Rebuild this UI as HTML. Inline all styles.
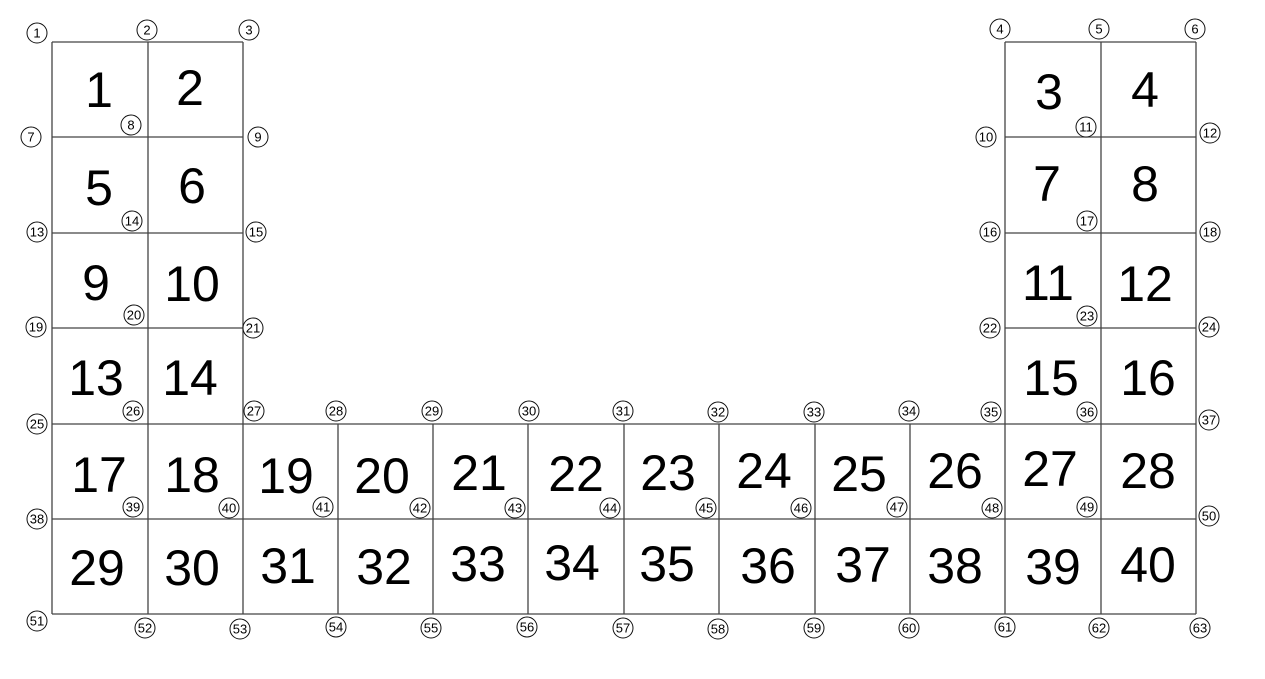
<!DOCTYPE html>
<html><head><meta charset="utf-8"><style>
html,body{margin:0;padding:0;background:#fff;width:1265px;height:679px;overflow:hidden}
svg{display:block}
.b{font:50px "Liberation Sans",sans-serif;fill:#000;text-anchor:middle;dominant-baseline:central}
.n{font:13px "Liberation Sans",sans-serif;fill:#000;text-anchor:middle;dominant-baseline:central}
circle{fill:#fff;stroke:#111;stroke-width:1}
line{stroke:#444;stroke-width:1.3}
</style></head><body>
<svg width="1265" height="679" viewBox="0 0 1265 679">
<g>
<line x1="52" y1="42" x2="243" y2="42"/><line x1="52" y1="137" x2="243" y2="137"/><line x1="52" y1="233" x2="243" y2="233"/><line x1="52" y1="328" x2="243" y2="328"/>
<line x1="52" y1="42" x2="52" y2="614"/><line x1="148" y1="42" x2="148" y2="614"/><line x1="243" y1="42" x2="243" y2="614"/>
<line x1="1005" y1="42" x2="1196" y2="42"/><line x1="1005" y1="137" x2="1196" y2="137"/><line x1="1005" y1="233" x2="1196" y2="233"/><line x1="1005" y1="328" x2="1196" y2="328"/>
<line x1="1005" y1="42" x2="1005" y2="614"/><line x1="1101" y1="42" x2="1101" y2="614"/><line x1="1196" y1="42" x2="1196" y2="614"/>
<line x1="52" y1="424" x2="1196" y2="424"/><line x1="52" y1="519" x2="1196" y2="519"/><line x1="52" y1="614" x2="1196" y2="614"/>
<line x1="338" y1="424" x2="338" y2="614"/><line x1="433" y1="424" x2="433" y2="614"/><line x1="528" y1="424" x2="528" y2="614"/><line x1="624" y1="424" x2="624" y2="614"/><line x1="719" y1="424" x2="719" y2="614"/><line x1="815" y1="424" x2="815" y2="614"/><line x1="910" y1="424" x2="910" y2="614"/>
</g>
<g>
<text class="b" x="99" y="90">1</text><text class="b" x="190" y="88">2</text><text class="b" x="1049" y="92">3</text><text class="b" x="1145" y="90">4</text>
<text class="b" x="99" y="188">5</text><text class="b" x="192" y="186">6</text><text class="b" x="1047" y="184">7</text><text class="b" x="1145" y="184">8</text>
<text class="b" x="96" y="283">9</text><text class="b" x="192" y="284">10</text><text class="b" x="1048" y="283">11</text><text class="b" x="1145" y="284">12</text>
<text class="b" x="96" y="378">13</text><text class="b" x="190" y="378">14</text><text class="b" x="1051" y="378">15</text><text class="b" x="1148" y="378">16</text>
<text class="b" x="99" y="475">17</text><text class="b" x="192" y="475">18</text><text class="b" x="286" y="476">19</text><text class="b" x="382" y="476">20</text><text class="b" x="479" y="473">21</text><text class="b" x="576" y="474">22</text><text class="b" x="668" y="473">23</text><text class="b" x="764" y="471">24</text><text class="b" x="859" y="474">25</text><text class="b" x="955" y="471">26</text><text class="b" x="1050" y="469">27</text><text class="b" x="1148" y="471">28</text>
<text class="b" x="97" y="568">29</text><text class="b" x="192" y="568">30</text><text class="b" x="288" y="566">31</text><text class="b" x="384" y="567">32</text><text class="b" x="478" y="564">33</text><text class="b" x="572" y="563">34</text><text class="b" x="667" y="564">35</text><text class="b" x="768" y="566">36</text><text class="b" x="863" y="565">37</text><text class="b" x="955" y="566">38</text><text class="b" x="1053" y="567">39</text><text class="b" x="1148" y="565">40</text>
</g>
<g>
<circle cx="37" cy="33" r="10"/><text class="n" x="37" y="33">1</text>
<circle cx="147" cy="30" r="10"/><text class="n" x="147" y="30">2</text>
<circle cx="249" cy="30" r="10"/><text class="n" x="249" y="30">3</text>
<circle cx="1000" cy="29" r="10"/><text class="n" x="1000" y="29">4</text>
<circle cx="1099" cy="29" r="10"/><text class="n" x="1099" y="29">5</text>
<circle cx="1195" cy="29" r="10"/><text class="n" x="1195" y="29">6</text>
<circle cx="31" cy="137" r="10"/><text class="n" x="31" y="137">7</text>
<circle cx="131" cy="125" r="10"/><text class="n" x="131" y="125">8</text>
<circle cx="258" cy="137" r="10"/><text class="n" x="258" y="137">9</text>
<circle cx="986" cy="137" r="10"/><text class="n" x="986" y="137">10</text>
<circle cx="1086" cy="127" r="10"/><text class="n" x="1086" y="127">11</text>
<circle cx="1210" cy="133" r="10"/><text class="n" x="1210" y="133">12</text>
<circle cx="37" cy="232" r="10"/><text class="n" x="37" y="232">13</text>
<circle cx="132" cy="221" r="10"/><text class="n" x="132" y="221">14</text>
<circle cx="256" cy="232" r="10"/><text class="n" x="256" y="232">15</text>
<circle cx="990" cy="232" r="10"/><text class="n" x="990" y="232">16</text>
<circle cx="1087" cy="221" r="10"/><text class="n" x="1087" y="221">17</text>
<circle cx="1210" cy="232" r="10"/><text class="n" x="1210" y="232">18</text>
<circle cx="36" cy="327" r="10"/><text class="n" x="36" y="327">19</text>
<circle cx="134" cy="315" r="10"/><text class="n" x="134" y="315">20</text>
<circle cx="253" cy="328" r="10"/><text class="n" x="253" y="328">21</text>
<circle cx="990" cy="328" r="10"/><text class="n" x="990" y="328">22</text>
<circle cx="1087" cy="316" r="10"/><text class="n" x="1087" y="316">23</text>
<circle cx="1209" cy="327" r="10"/><text class="n" x="1209" y="327">24</text>
<circle cx="37" cy="424" r="10"/><text class="n" x="37" y="424">25</text>
<circle cx="133" cy="411" r="10"/><text class="n" x="133" y="411">26</text>
<circle cx="254" cy="411" r="10"/><text class="n" x="254" y="411">27</text>
<circle cx="336" cy="411" r="10"/><text class="n" x="336" y="411">28</text>
<circle cx="432" cy="411" r="10"/><text class="n" x="432" y="411">29</text>
<circle cx="529" cy="411" r="10"/><text class="n" x="529" y="411">30</text>
<circle cx="623" cy="411" r="10"/><text class="n" x="623" y="411">31</text>
<circle cx="718" cy="412" r="10"/><text class="n" x="718" y="412">32</text>
<circle cx="814" cy="412" r="10"/><text class="n" x="814" y="412">33</text>
<circle cx="909" cy="411" r="10"/><text class="n" x="909" y="411">34</text>
<circle cx="991" cy="412" r="10"/><text class="n" x="991" y="412">35</text>
<circle cx="1087" cy="412" r="10"/><text class="n" x="1087" y="412">36</text>
<circle cx="1209" cy="420" r="10"/><text class="n" x="1209" y="420">37</text>
<circle cx="37" cy="519" r="10"/><text class="n" x="37" y="519">38</text>
<circle cx="133" cy="507" r="10"/><text class="n" x="133" y="507">39</text>
<circle cx="229" cy="508" r="10"/><text class="n" x="229" y="508">40</text>
<circle cx="323" cy="507" r="10"/><text class="n" x="323" y="507">41</text>
<circle cx="420" cy="508" r="10"/><text class="n" x="420" y="508">42</text>
<circle cx="515" cy="508" r="10"/><text class="n" x="515" y="508">43</text>
<circle cx="610" cy="508" r="10"/><text class="n" x="610" y="508">44</text>
<circle cx="706" cy="508" r="10"/><text class="n" x="706" y="508">45</text>
<circle cx="801" cy="508" r="10"/><text class="n" x="801" y="508">46</text>
<circle cx="897" cy="507" r="10"/><text class="n" x="897" y="507">47</text>
<circle cx="992" cy="508" r="10"/><text class="n" x="992" y="508">48</text>
<circle cx="1087" cy="507" r="10"/><text class="n" x="1087" y="507">49</text>
<circle cx="1209" cy="516" r="10"/><text class="n" x="1209" y="516">50</text>
<circle cx="37" cy="621" r="10"/><text class="n" x="37" y="621">51</text>
<circle cx="145" cy="628" r="10"/><text class="n" x="145" y="628">52</text>
<circle cx="240" cy="629" r="10"/><text class="n" x="240" y="629">53</text>
<circle cx="336" cy="627" r="10"/><text class="n" x="336" y="627">54</text>
<circle cx="431" cy="628" r="10"/><text class="n" x="431" y="628">55</text>
<circle cx="527" cy="627" r="10"/><text class="n" x="527" y="627">56</text>
<circle cx="623" cy="628" r="10"/><text class="n" x="623" y="628">57</text>
<circle cx="718" cy="629" r="10"/><text class="n" x="718" y="629">58</text>
<circle cx="814" cy="628" r="10"/><text class="n" x="814" y="628">59</text>
<circle cx="909" cy="628" r="10"/><text class="n" x="909" y="628">60</text>
<circle cx="1005" cy="627" r="10"/><text class="n" x="1005" y="627">61</text>
<circle cx="1099" cy="628" r="10"/><text class="n" x="1099" y="628">62</text>
<circle cx="1200" cy="628" r="10"/><text class="n" x="1200" y="628">63</text>
</g>
</svg>
</body></html>
